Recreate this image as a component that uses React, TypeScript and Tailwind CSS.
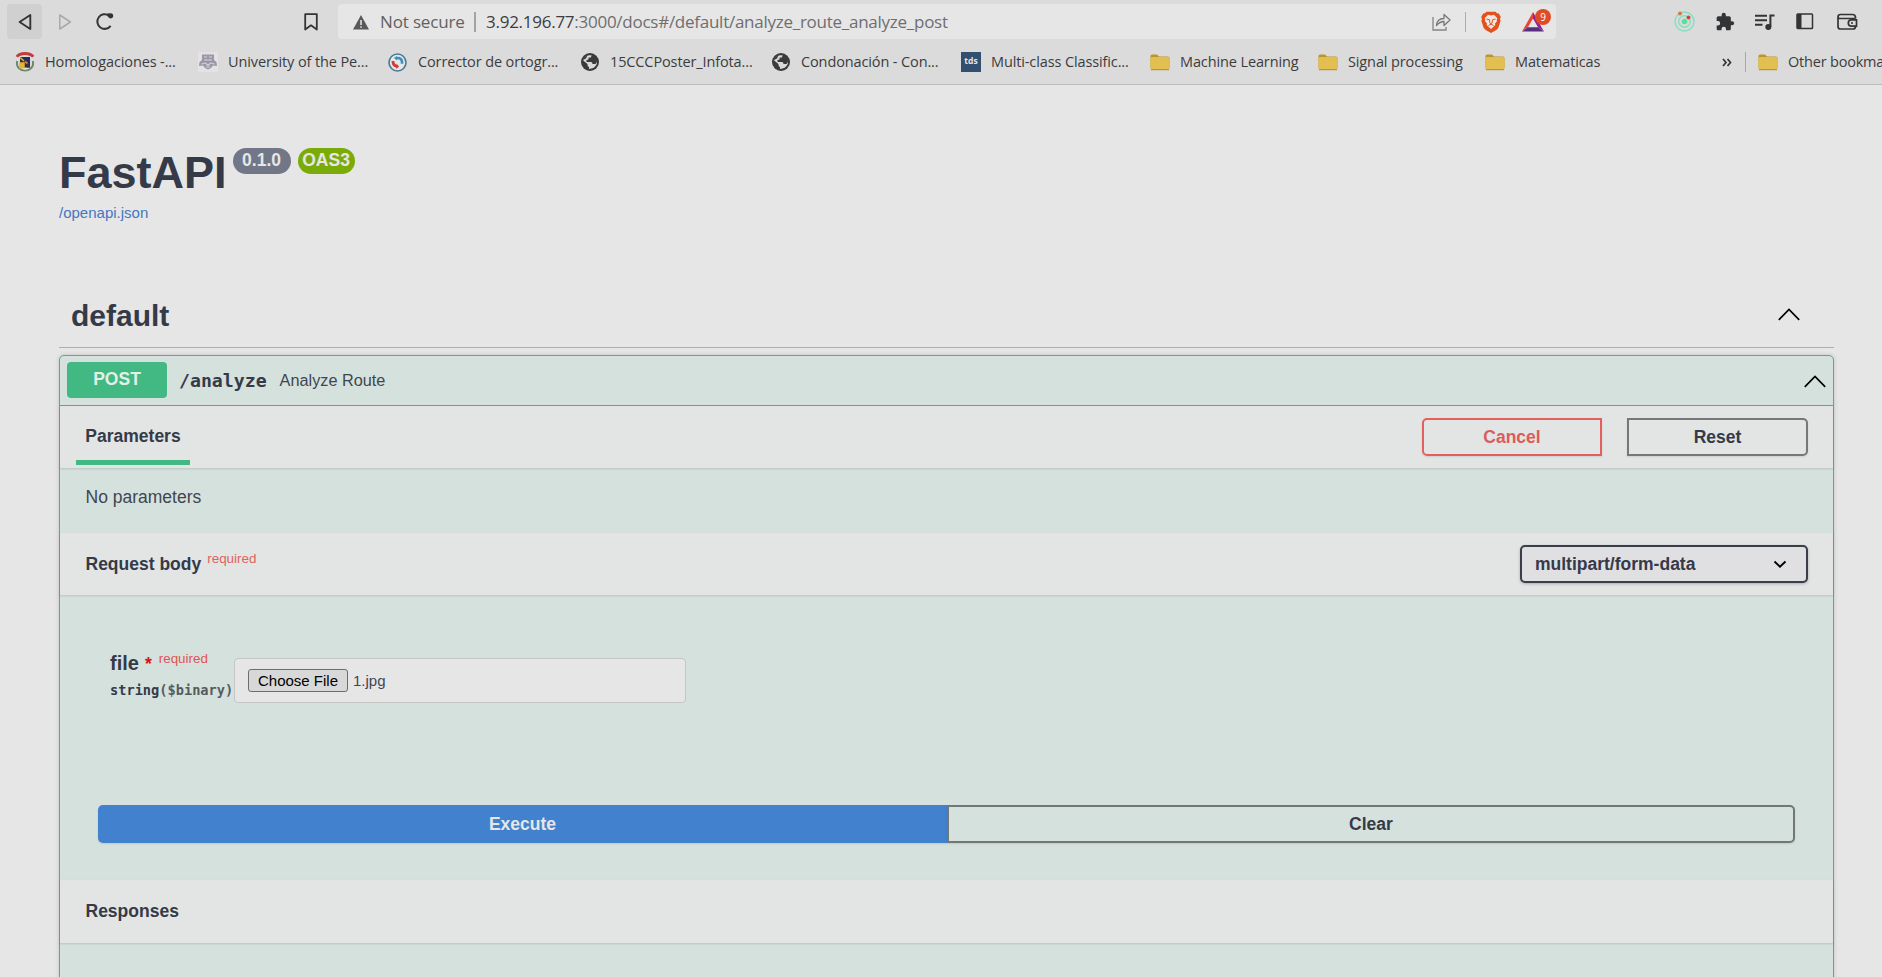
import React from "react";

const Folder = () => (
  <svg width="20" height="17" viewBox="0 0 20 17" className="shrink-0">
    <path d="M.5 2Q.5.5 2 .5h5l2 2H18q1.500 0 1.500 1.500v10H.5z" fill="#b8962c" />
    <rect x=".5" y="3" width="19" height="13" rx="1.500" fill="#e2bf50" />
    <path d="M1 15.700h18" stroke="#b18c33" />
  </svg>
);

const Globe = () => (
  <svg width="18" height="18" viewBox="0 0 18 18" className="ml-[1px] shrink-0">
    <circle cx="9" cy="9" r="9" fill="#3a3b3d" />
    <path
      d="M10.500 2.300L10 4.500H7.500V6.500L5.500 7v2h4.500q1.500.2 1.500 2h3q1-1 1-3 1 3-1 5-1.500 2-4 2.500l-2.500.5v-2q-1.500-.3-1.500-2V11L2.200 7.500Q2.500 5 5 3.300 7.500 1.800 10.500 2.300z"
      fill="#dbdbdb"
    />
    <path d="M2 7Q3 3.500 6.500 2.300L5 5.500z" fill="#3a3b3d" />
  </svg>
);

const Crest = () => (
  <svg width="20" height="20" viewBox="0 0 20 20" className="shrink-0">
    <path d="M2.200 9c-1.500 6 3 9.500 7.800 9.500s9.300-3.500 7.800-9.500" fill="none" stroke="#6d8a68" strokeWidth="2" />
    <path d="M5.500 15.500q4.500 3 9 0" fill="none" stroke="#dcdcd4" strokeWidth="1.500" />
    <path d="M5 5h10v10.500H5z" fill="#25286b" />
    <path d="M5 5h3l7 8v2.500h-3L5 8z" fill="#3a2f3a" />
    <path d="M5 5.500l4 3.500M5 11h4v4.500H5z" fill="#e4b52d" stroke="#e4b52d" strokeWidth="1.500" />
    <path d="M1.800 4.800Q4 1.500 10 1.500t8.200 3.300" fill="none" stroke="#c23a3c" strokeWidth="2.800" />
    <path d="M10 9.500l2.500 2" stroke="#c8862d" strokeWidth="2" />
  </svg>
);

const University = () => (
  <svg width="20" height="20" viewBox="0 0 20 20" className="shrink-0">
    <rect width="20" height="20" fill="#e4e2e6" />
    <path d="M4 2.500h12V8l2.500 2 .5 4-4-.5-2 2.500-3 1.500L7 16l-2-2.500-4 .5.500-4L4 8z" fill="#9c97a6" />
    <path d="M6 5h3M11 5h3M6 8h8M3.500 12l4-1 2.500 2.500L12.500 11l4 1M8 15h4" stroke="#d6d2dc" strokeWidth="1.100" fill="none" />
  </svg>
);

const Corrector = () => (
  <svg width="19" height="19" viewBox="0 0 19 19" className="shrink-0">
    <circle cx="9.500" cy="9.500" r="8.500" fill="#e6e6e6" stroke="#47799a" strokeWidth="1.600" />
    <path d="M8 5.200q5-1 6 3v2.500" fill="none" stroke="#3f8fb8" strokeWidth="2.600" />
    <path d="M5 8v1q.5 4 4.500 4.500" fill="none" stroke="#d33b38" strokeWidth="2.800" />
    <path d="M8.500 10.500l2.500 3-2.500 2.500z" fill="#d33b38" />
    <path d="M9 3v4.500L6 5z" fill="#3f8fb8" />
  </svg>
);

const Tds = () => (
  <span className="flex h-5 w-5 shrink-0 items-center justify-center bg-[#315070] pb-px font-['Open_Sans',sans-serif] text-[8.500px] leading-none font-bold tracking-normal text-[#e6e6e6]">
    tds
  </span>
);

const ChevronUp = () => (
  <svg width="22" height="13" viewBox="0 0 22 13" className="shrink-0">
    <path d="M.8 11.900L11 1.400l10.200 10.500" fill="none" stroke="#000" strokeWidth="1.700" />
  </svg>
);

type BookmarkProps = { icon: React.ReactNode; label: string; width: string };
const Bookmark = ({ icon, label, width }: BookmarkProps) => (
  <div className={`flex shrink-0 items-center ${width}`}>
    <span className="flex w-[30px] shrink-0">{icon}</span>
    <span className="whitespace-nowrap">{label}</span>
  </div>
);

const BraveLion = () => (
  <svg width="20" height="22" viewBox="0 0 20 22" className="ml-[15px] shrink-0">
    <path d="M5.500.8h9l1.500 1.500 1.800.2L19.800 6l-.8 2 .6 2-2.300 7-2 2L10 22l-5.300-3-2-2L.4 10 1 8 .2 6l2-3.500L4 2.300z" fill="#e4501c" />
    <path
      d="M10 4.500l3-.8 3.300 3.500-.6 2 .3 1-2 2.300.3 1.500L10 18l-4.300-4 .3-1.500-2-2.300.3-1-.6-2L7 3.700z"
      fill="#f0e6e2"
    />
    <path d="M5.500 8l3 .8.300 3 1.200 1 1.200-1 .3-3 3-.8M7.500 14.500l2.500-1.300 2.500 1.300" fill="none" stroke="#e4501c" strokeWidth="1" />
  </svg>
);

const BatTriangle = () => (
  <div className="relative ml-[21px] h-[20px] w-[22px] shrink-0">
    <svg width="22" height="20" viewBox="0 0 22 20">
      <path d="M11 0v6.500L6 15.300 0 19.500z" fill="#e5483a" />
      <path d="M0 19.500l6-4.200h10l6 4.200z" fill="#55307f" />
      <path d="M11 0l11 19.500-6-4.200-5-8.800z" fill="#93268f" />
    </svg>
    <span className="absolute -top-[3px] left-[13px] flex h-[16px] w-[16px] items-center justify-center rounded-full bg-[#df4b25] text-[10px] leading-none text-white">
      9
    </span>
  </div>
);

const BrowserBar = () => (
  <header className="h-[85px] shrink-0 overflow-hidden border-b border-[#bcbcbc] bg-[#dbdbdb] font-['Open_Sans',sans-serif] text-[#3b3b3d]">
    <div className="flex h-[43px] items-center pl-[7px]">
      <div className="flex h-[35px] w-[35px] shrink-0 items-center justify-center rounded bg-[#d0d0d0]">
        <svg width="14" height="18" viewBox="0 0 14 18">
          <path d="M12.300 2v14L1.600 9z" fill="none" stroke="#333436" strokeWidth="1.900" strokeLinejoin="round" />
        </svg>
      </div>
      <svg width="14" height="18" viewBox="0 0 14 18" className="ml-[16px] shrink-0">
        <path d="M1.800 2v14L12.400 9z" fill="none" stroke="#a9a9a9" strokeWidth="1.500" strokeLinejoin="round" />
      </svg>
      <svg width="20" height="19" viewBox="0 0 20 19" className="ml-[23px] shrink-0">
        <path d="M15.600 13.800A7.300 7.300 0 1 1 14 3.700" fill="none" stroke="#333436" strokeWidth="2" />
        <path d="M12 1.500l4-.2q2.300.3 2.300 2.700-.2 2-2.500 2.500Q12.500 6 12 1.500z" fill="#333436" />
      </svg>
      <svg width="14" height="18" viewBox="0 0 14 18" className="ml-[189px] shrink-0">
        <path d="M1.200 1.200h11.600v15.300L7 12.300l-5.800 4.200z" fill="none" stroke="#333436" strokeWidth="1.800" strokeLinejoin="round" />
      </svg>
      <div className="ml-[20px] flex h-[35px] w-[1218px] shrink-0 items-center rounded bg-[#e6e6e6] pl-[15px]">
        <svg width="16" height="15" viewBox="0 0 16 15" className="mt-[1px] shrink-0">
          <path d="M8 0l8 14.500H0z" fill="#58595b" />
          <path d="M8 5v5M8 11.200v1.600" stroke="#e6e6e6" strokeWidth="1.500" />
        </svg>
        <span className="ml-[11px] w-[84px] shrink-0 whitespace-nowrap text-[17px] tracking-[-0.15px] text-[#616163]">Not secure</span>
        <span className="ml-[10px] h-5 w-[2px] shrink-0 bg-[#a4a4a4]" />
        <span className="ml-[10px] w-[946px] shrink-0 whitespace-nowrap text-[17px] tracking-[-0.260px] text-[#6e6e70]">
          <span className="text-[#3d3d3f]">3.92.196.77</span>:3000/docs#/default/analyze_route_analyze_post
        </span>
        <svg width="19" height="18" viewBox="0 0 19 18" className="shrink-0">
          <path d="M1 4v13h13v-3" fill="none" stroke="#858587" strokeWidth="1.300" />
          <path d="M4.500 12.500Q5 5.500 12 5.500v-4l6 5.500-6 5.500v-4q-4 0-7.500 4z" fill="none" stroke="#77777a" strokeWidth="1.300" strokeLinejoin="round" />
        </svg>
        <span className="ml-[14px] h-5 w-px shrink-0 bg-[#adadad]" />
        <BraveLion />
        <BatTriangle />
      </div>
      <svg width="21" height="21" viewBox="0 0 21 21" className="ml-[118px] shrink-0">
        <circle cx="10.500" cy="10.500" r="9.500" fill="none" stroke="#84dfc0" strokeWidth="1.400" />
        <circle cx="10.500" cy="10.500" r="5.800" fill="none" stroke="#84dfc0" strokeWidth="1.400" />
        <circle cx="10.500" cy="10.500" r="2.800" fill="#5fdc9e" />
        <circle cx="6" cy="2.500" r="2" fill="#d47a45" />
        <circle cx="14.500" cy="6.500" r="2" fill="#d0453a" />
      </svg>
      <svg width="20" height="20" viewBox="0 0 24 24" className="ml-[20px] shrink-0">
        <path
          d="M20.500 11H19V7c0-1.100-.9-2-2-2h-4V3.500a2.500 2.500 0 0 0-5 0V5H4c-1.100 0-2 .9-2 2v3.800h1.500a2.700 2.700 0 0 1 0 5.400H2V20c0 1.100.9 2 2 2h3.800v-1.500a2.700 2.700 0 0 1 5.400 0V22H17c1.100 0 2-.9 2-2v-4h1.500a2.500 2.500 0 0 0 0-5z"
          fill="#333436"
        />
      </svg>
      <svg width="20" height="18" viewBox="0 0 20 18" className="ml-[20px] shrink-0">
        <path d="M0 2.800h12M0 7.300h12M0 11.800h7.500" stroke="#333436" strokeWidth="1.900" />
        <path d="M15.400 14V2.600H19.500" fill="none" stroke="#333436" strokeWidth="2" />
        <circle cx="13.300" cy="14" r="3" fill="#333436" />
      </svg>
      <svg width="18" height="17" viewBox="0 0 18 17" className="ml-[21px] shrink-0">
        <rect x="1" y="1" width="15.500" height="14.500" rx=".8" fill="none" stroke="#333436" strokeWidth="1.500" />
        <path d="M1 1h4.500v14.500H1z" fill="#333436" />
      </svg>
      <svg width="21" height="18" viewBox="0 0 21 18" className="ml-[23px] shrink-0">
        <path d="M18.500 5.500v-1q0-3-3-3h-12Q1 1.500 1 4v9.500q0 2.500 2.500 2.500h12.500q2.500 0 2.500-2.500M1 4.500q.5 1 2 1h15.500" fill="none" stroke="#333436" strokeWidth="1.700" />
        <path d="M19.500 6.800h-5a3.200 3.200 0 0 0 0 6.400h5z" fill="#dbdbdb" stroke="#333436" strokeWidth="1.700" />
        <path d="M14 10h2" stroke="#333436" strokeWidth="1.500" />
      </svg>
    </div>
    <div className="flex h-[38px] items-center pl-[15px] text-[14.500px] tracking-[-0.120px]">
      <Bookmark icon={<Crest />} label="Homologaciones -..." width="w-[183px]" />
      <Bookmark icon={<University />} label="University of the Pe..." width="w-[190px]" />
      <Bookmark icon={<Corrector />} label="Corrector de ortogr..." width="w-[192px]" />
      <Bookmark icon={<Globe />} label="15CCCPoster_Infota..." width="w-[191px]" />
      <Bookmark icon={<Globe />} label="Condonación - Con..." width="w-[190px]" />
      <Bookmark icon={<Tds />} label="Multi-class Classific..." width="w-[189px]" />
      <Bookmark icon={<Folder />} label="Machine Learning" width="w-[168px]" />
      <Bookmark icon={<Folder />} label="Signal processing" width="w-[167px]" />
      <Bookmark icon={<Folder />} label="Matematicas" width="w-[237px]" />
      <svg width="10" height="9" viewBox="0 0 10 9" className="shrink-0">
        <path d="M1 1l3 3.500L1 8M5.500 1l3 3.500L5.500 8" fill="none" stroke="#333436" strokeWidth="1.700" />
      </svg>
      <span className="ml-[13px] h-5 w-px shrink-0 bg-[#a3a9a6]" />
      <div className="ml-[12px] flex shrink-0 tracking-[-0.200px]">
        <Bookmark icon={<Folder />} label="Other bookma" width="w-[124px]" />
      </div>
    </div>
  </header>
);

const SectionHeader = ({ children, height }: { children: React.ReactNode; height: string }) => (
  <div className={`flex shrink-0 items-center bg-[#e2e5e3] pr-[25px] pl-[26px] shadow-[0_1px_2px_rgba(0,0,0,0.14)] ${height}`}>{children}</div>
);

export default function App() {
  return (
    <div className="flex h-[977px] w-[1882px] flex-col overflow-hidden bg-[#e6e6e6] font-['Liberation_Sans',sans-serif] text-[#353a49]">
      <BrowserBar />
      <main className="ml-[59px] flex w-[1775px] flex-col pt-[63px]">
        <div className="flex h-[48px] items-start">
          <h1 className="mt-[2px] text-[45px] leading-[45px] font-bold">FastAPI</h1>
          <span className="ml-[6px] flex h-[26px] w-[58px] items-center justify-center rounded-full bg-[#717786] pb-[1px] text-[17.500px] leading-none font-bold text-[#e6e6e6]">
            0.1.0
          </span>
          <span className="ml-[7px] flex h-[26px] w-[57px] items-center justify-center rounded-full bg-[#7aab06] pb-[1px] text-[17.500px] leading-none font-bold text-[#e6e6e6]">
            OAS3
          </span>
        </div>
        <a className="mt-[9px] text-[15px] leading-[15px] text-[#4377c0]">/openapi.json</a>

        <div className="mt-[63px] flex h-[65px] shrink-0 items-center justify-between border-b border-[#adb0b3] pr-[34px] pl-[12px]">
          <h2 className="mt-[2px] text-[30px] leading-[30px] font-bold">default</h2>
          <span className="mb-[2px] flex">
            <ChevronUp />
          </span>
        </div>

        <section className="mt-[7px] flex h-[700px] shrink-0 flex-col rounded-[5px] border border-[#42b882] bg-[#d5e1dc] shadow-[0_0_4px_rgba(0,0,0,0.17)]">
          <div className="flex h-[50px] shrink-0 items-center border-b border-[#42b882] pr-[7px] pl-[7px]">
            <span className="mb-px flex h-[36px] w-[100px] items-center justify-center rounded-[4px] bg-[#42b882] text-[17.500px] leading-none font-bold text-[#e2f0e9]">
              POST
            </span>
            <span className="mt-px ml-[12px] font-['DejaVu_Sans_Mono',monospace] text-[18.200px] leading-none font-bold">/analyze</span>
            <span className="ml-[13px] text-[16.250px] leading-none text-[#404651]">Analyze Route</span>
            <span className="ml-auto flex pt-[1px]">
              <ChevronUp />
            </span>
          </div>

          <SectionHeader height="h-[62px]">
            <div className="-ml-[10px] flex h-full w-[114px] flex-col items-center justify-between">
              <span className="mt-[21px] text-[17.500px] leading-[18px] font-bold">Parameters</span>
              <span className="mb-[3px] h-[5px] w-full bg-[#42b882]" />
            </div>
            <button className="ml-auto h-[38px] w-[180px] rounded-l-[5px] border-2 border-[#e3605d] pt-[2px] text-[17.500px] leading-none font-bold text-[#dc5c5a] shadow-[0_1px_2px_rgba(0,0,0,0.1)]">
              Cancel
            </button>
            <button className="ml-[25px] h-[38px] w-[181px] rounded-r-[5px] border-2 border-[#757778] pt-[2px] text-[17.500px] leading-none font-bold shadow-[0_1px_2px_rgba(0,0,0,0.1)]">
              Reset
            </button>
          </SectionHeader>

          <div className="h-[65px] shrink-0 pt-[19px] pl-[25.500px] text-[17.500px] leading-[20px] text-[#404651]">No parameters</div>

          <SectionHeader height="h-[62px]">
            <span className="-ml-[0.500px] pt-[2px] text-[17.500px] leading-none font-bold">Request body</span>
            <span className="mb-[11px] ml-[6px] text-[13.400px] leading-none font-normal text-[#e06260]">required</span>
            <div className="ml-auto flex h-[38px] w-[288px] items-center justify-between rounded-[5px] border-2 border-[#3a3e4a] bg-[#e0e0e2] pr-[19px] pl-[13px] text-[17.500px] leading-none font-bold shadow-[0_1px_3px_rgba(0,0,0,0.25)]">
              <span className="pt-[2px]">multipart/form-data</span>
              <svg width="14" height="9" viewBox="0 0 14 9">
                <path d="M1.500 1.500L7 6.800l5.500-5.300" fill="none" stroke="#000" strokeWidth="1.900" />
              </svg>
            </div>
          </SectionHeader>

          <div className="flex h-[285px] shrink-0 flex-col">
            <div className="flex pt-[56px] pl-[50px]">
              <div className="flex w-[124px] flex-col">
                <div className="flex h-[25px] items-end text-[#353a49]">
                  <span className="text-[20px] leading-[25px] font-bold">file</span>
                  <span className="ml-[6px] self-end text-[17.500px] leading-[23px] font-bold text-[#d41414]">*</span>
                  <span className="mb-[11px] ml-[7px] text-[13.400px] leading-[13px] text-[#e05555]">required</span>
                </div>
                <span className="mt-[5px] font-['DejaVu_Sans_Mono',monospace] text-[13.650px] leading-[18px] font-bold whitespace-nowrap">
                  string<span className="text-[#545b5e]">($binary)</span>
                </span>
              </div>
              <div className="mt-[7px] flex h-[45px] w-[452px] items-center rounded-[4px] border border-[#c4c6c6] bg-[#e6e6e6] pl-[13px] text-[15px] leading-none">
                <button className="h-[23px] w-[100px] rounded-[3px] border border-[#6c6c6c] bg-[#d8d8d8] leading-none text-black">Choose File</button>
                <span className="ml-[5px] text-[#404651]">1.jpg</span>
              </div>
            </div>
            <div className="mt-[102px] ml-[38px] flex h-[38px] w-[1697px] text-[17.500px] leading-none font-bold">
              <button className="w-[849px] rounded-l-[5px] bg-[#4281cd] pt-[2px] text-[#e6e6e6] shadow-[0_1px_2px_rgba(0,0,0,0.1)]">Execute</button>
              <button className="w-[848px] rounded-r-[5px] border-2 border-[#717775] pt-[2px] shadow-[0_1px_2px_rgba(0,0,0,0.1)]">Clear</button>
            </div>
          </div>

          <SectionHeader height="h-[63px]">
            <span className="-ml-[0.500px] text-[17.500px] leading-none font-bold">Responses</span>
          </SectionHeader>
        </section>
      </main>
    </div>
  );
}
